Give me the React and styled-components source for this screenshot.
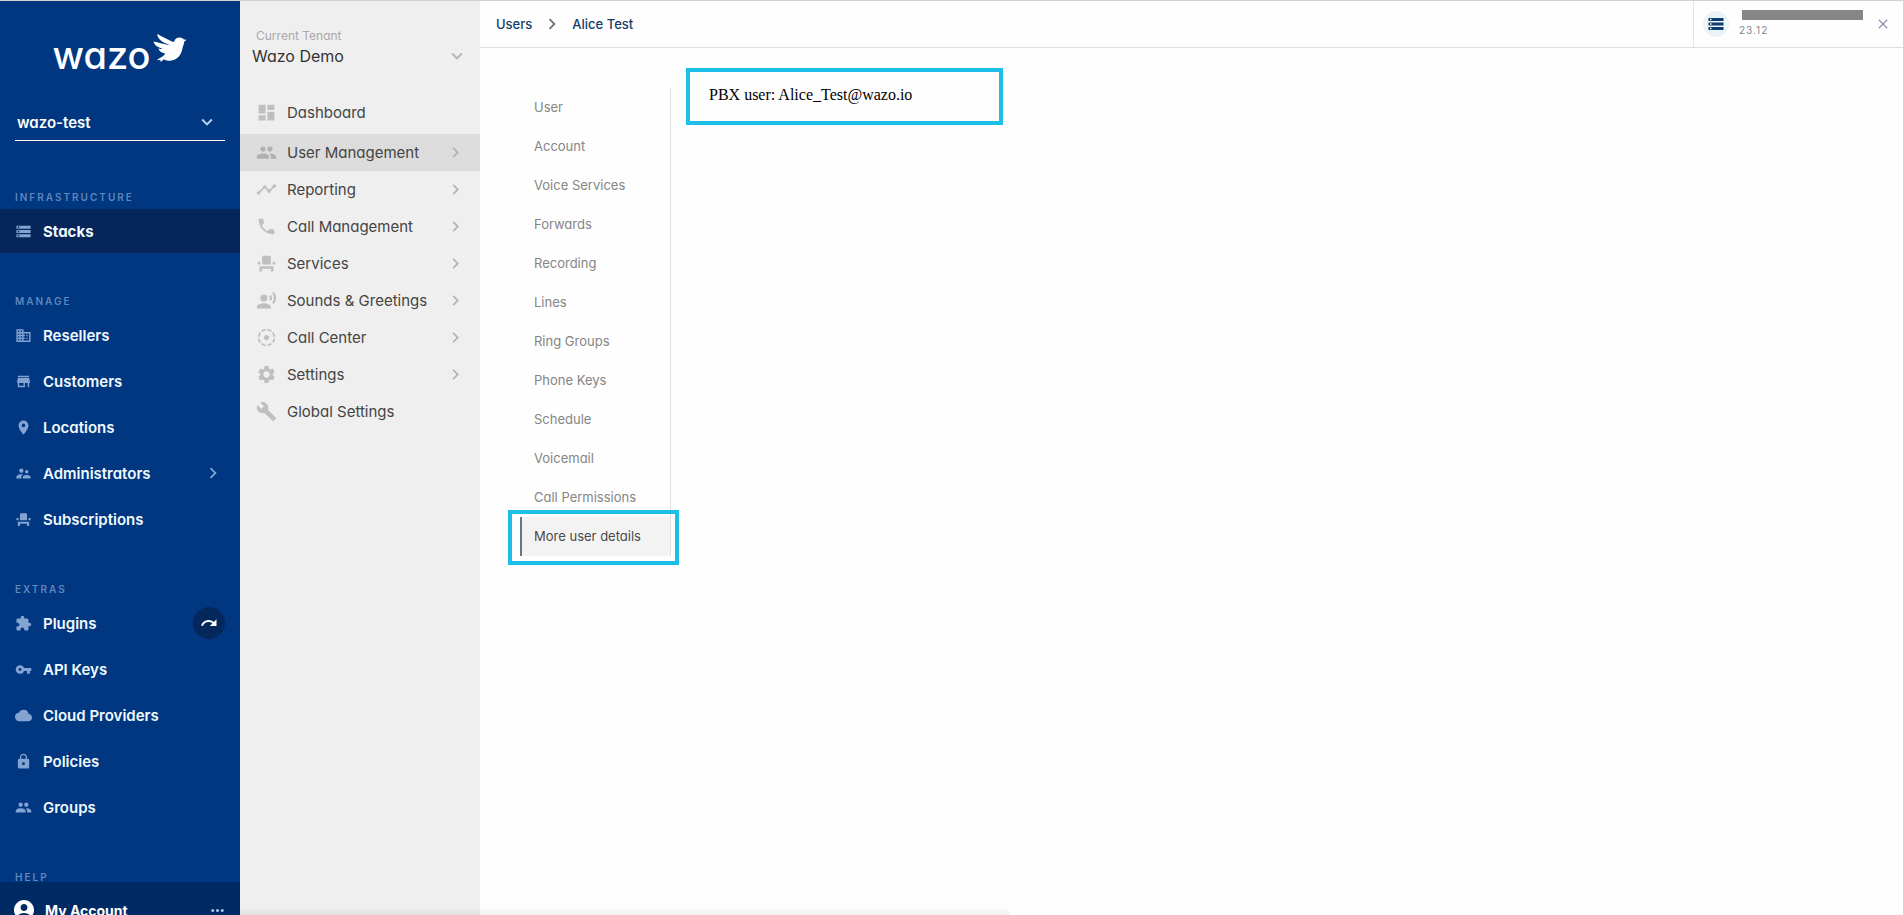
import React from "react";
import styled, { createGlobalStyle, css } from "styled-components";
import {
  MdStorage, MdDomain, MdStore, MdPlace, MdSupervisorAccount, MdEventSeat,
  MdExtension, MdVpnKey, MdCloud, MdLock, MdGroup, MdRedo, MdAccountCircle,
  MdMoreHoriz, MdDashboard, MdTimeline, MdPhone, MdRecordVoiceOver,
  MdFilterTiltShift, MdSettings, MdBuild, MdClose,
  MdKeyboardArrowDown, MdKeyboardArrowRight,
} from "react-icons/md";

const GlobalStyle = createGlobalStyle`
  *, *::before, *::after { box-sizing: border-box; }
  body {
    margin: 0;
    background: #fefefe;
    color: #444;
    font-family: Inter, "Open Sans", sans-serif;
    font-feature-settings: "cv11";
    font-size: 15px;
  }
  a { color: inherit; text-decoration: none; }
  button, select {
    font: inherit;
    font-feature-settings: inherit;
    color: inherit;
    background: none;
    border: 0;
    padding: 0;
    margin: 0;
    cursor: pointer;
  }
  select { appearance: none; }
  svg { display: block; flex: none; }
`;

const Page = styled.div`
  display: grid;
  grid-template-columns: 240px 240px minmax(0, 1fr);
  height: 100vh;
  overflow: hidden;
  border-top: 1px solid #d2d2d2;
`;

/* Main sidebar */
const Sidebar = styled.aside`
  display: flex;
  flex-direction: column;
  min-height: 0;
  background: #003780;
  color: #fff;
`;

const Logo = styled.a`
  display: flex;
  align-items: flex-start;
  justify-content: center;
  height: 84px;
  padding-top: 32px;
  gap: 3px;
`;

const LogoWord = styled.span`
  margin-top: 3px;
  font-size: 38px;
  font-weight: 500;
  line-height: 38px;
`;

const Picker = styled.div`
  display: grid;
  align-items: center;
  & > * { grid-area: 1 / 1; }
  & > svg { justify-self: end; pointer-events: none; }
`;

const StackPicker = styled(Picker)`
  margin: 17px 15px 0;
  height: 39px;
  padding-top: 2px;
  border-bottom: 1px solid #fff;
  & > svg { margin-right: 7px; color: #b9d4f5; }
`;

const StackSelect = styled.select`
  height: 36px;
  padding-left: 2px;
  font-weight: 600;
  color: #fff;
`;

const SideNav = styled.nav`
  flex: 1;
  min-height: 0;
  overflow: hidden;
  padding-top: 49px;
`;

const SideGroup = styled.section`
  margin-bottom: 41px;
`;

const SideHeading = styled.h2`
  margin: 0 0 5px;
  padding-left: 15px;
  color: #5f86bd;
  font-size: 10px;
  font-weight: 600;
  line-height: 14px;
  letter-spacing: 2px;
`;

const SideList = styled.ul`
  display: grid;
  gap: 2px;
  margin: 0;
  padding: 0;
  list-style: none;
`;

const SideItem = styled.li`
  display: flex;
  align-items: center;
  height: 44px;
  padding: 0 15px;
  background: ${(p) => (p.$active ? "#06265a" : "transparent")};
`;

const SideLink = styled.a`
  flex: 1;
  display: flex;
  align-items: center;
  gap: 11px;
  font-weight: ${(p) => (p.$active ? 700 : 600)};
  color: #f0faff;
  & > svg { color: #83a3d3; }
  & > svg:last-child { margin: 0 1px 0 auto; }
`;

const RoundButton = styled.button`
  display: grid;
  place-items: center;
  width: 32px;
  height: 32px;
  border-radius: 50%;
  background: #05285c;
  color: #fff;
`;

const AccountBar = styled.div`
  flex: 0 0 33px;
  overflow: hidden;
  background: #002a64;
`;

const AccountRow = styled.div`
  display: flex;
  align-items: center;
  justify-content: space-between;
  height: 56px;
  padding: 0 13px 0 12px;
`;

const AccountLink = styled.a`
  display: flex;
  align-items: center;
  gap: 9px;
  font-size: 14px;
  font-weight: 700;
`;

const MoreButton = styled.button`
  color: #a9c3e6;
`;

/* Tenant panel */
const TenantPanel = styled.aside`
  background: #efefef;
`;

const TenantField = styled.div`
  padding: 26px 12px 0;
  height: 93px;
`;

const TenantLabel = styled.label`
  display: block;
  padding-left: 4px;
  color: #a9a9a9;
  font-size: 12px;
  line-height: 18px;
`;

const TenantPicker = styled(Picker)`
  & > svg { color: #b5b5b5; }
`;

const TenantSelect = styled.select`
  height: 22px;
  font-size: 16px;
  color: #333;
`;

const TenantMenu = styled.ul`
  margin: 0;
  padding: 0;
  list-style: none;
`;

const TenantLink = styled.a`
  display: flex;
  align-items: center;
  gap: 10px;
  height: 37px;
  padding: 0 14px 0 16px;
  background: ${(p) => (p.$active ? "#dcdcdc" : "transparent")};
  margin-bottom: ${(p) => (p.$lead ? "3px" : "0")};
  & > svg:first-child { color: ${(p) => (p.$active ? "#b0b0b0" : "#bfbfbf")}; }
  & > svg:last-child { margin-left: auto; color: #b3b3b3; }
`;

/* Content */
const Main = styled.main`
  display: flex;
  flex-direction: column;
  min-width: 0;
`;

const Header = styled.header`
  display: flex;
  justify-content: space-between;
  height: 47px;
  border-bottom: 1px solid #dedede;
`;

const Breadcrumb = styled.nav`
  display: flex;
  align-items: center;
  gap: 9px;
  padding-left: 16px;
  color: #143c66;
  font-size: 13px;
  font-weight: 500;
  & > svg { color: #707070; }
`;

const StackInfo = styled.div`
  display: flex;
  align-items: center;
  width: 210px;
  padding: 0 12px 0 9px;
  border-left: 1px solid #e4e4e4;
`;

const StackBadge = styled.span`
  display: grid;
  place-items: center;
  width: 26px;
  height: 26px;
  margin-right: 10px;
  border-radius: 50%;
  background: #edf3fa;
  color: #0d3c72;
`;

const StackText = styled.div`
  flex: 1;
  display: grid;
  gap: 3px;
  padding-bottom: 2px;
`;

const Redacted = styled.span`
  width: 121px;
  height: 10px;
  margin-left: 3px;
  background: #868686;
`;

const Version = styled.span`
  color: #7d8794;
  font-size: 10px;
  line-height: 14px;
  letter-spacing: 1px;
`;

const CloseButton = styled.button`
  color: #8f98ac;
`;

const Body = styled.div`
  display: flex;
  align-items: flex-start;
  gap: 15px;
  padding: 20px 40px 0;
`;

const highlight = css`
  border: 4px solid #1cbfe8;
`;

const Tabs = styled.nav`
  width: 151px;
  margin-top: 20px;
  border-right: 1px solid #dfdfdf;
`;

const TabLink = styled.a`
  display: flex;
  align-items: center;
  position: relative;
  height: 39px;
  padding: 0 0 2px 12px;
  border-left: 2px solid transparent;
  color: #858585;
  font-size: 13px;
  ${(p) => p.$active && css`
    border-left-color: #66758c;
    background: #f3f3f3;
    color: #4a4a4a;
    &::after {
      content: "";
      position: absolute;
      inset: -7px -9px -9px -14px;
      ${highlight}
    }
  `}
`;

const Details = styled.section`
  ${highlight}
  flex: 0 1 317px;
  padding: 13px 19px 17px;
  color: #000;
  font-family: "Liberation Serif", serif;
  font-size: 16px;
  line-height: 19px;
`;

const BottomShade = styled.div`
  position: fixed;
  left: 240px;
  right: 47%;
  bottom: 0;
  height: 8px;
  background: linear-gradient(rgba(0, 0, 0, 0), rgba(0, 0, 0, 0.06));
  pointer-events: none;
`;

const groups = [
  { title: "INFRASTRUCTURE", items: [{ label: "Stacks", icon: MdStorage, active: true }] },
  {
    title: "MANAGE",
    items: [
      { label: "Resellers", icon: MdDomain },
      { label: "Customers", icon: MdStore },
      { label: "Locations", icon: MdPlace },
      { label: "Administrators", icon: MdSupervisorAccount, more: true },
      { label: "Subscriptions", icon: MdEventSeat },
    ],
  },
  {
    title: "EXTRAS",
    items: [
      { label: "Plugins", icon: MdExtension, action: true },
      { label: "API Keys", icon: MdVpnKey },
      { label: "Cloud Providers", icon: MdCloud },
      { label: "Policies", icon: MdLock },
      { label: "Groups", icon: MdGroup },
    ],
  },
  { title: "HELP", items: [] },
];

const tenantItems = [
  { label: "Dashboard", icon: MdDashboard, lead: true },
  { label: "User Management", icon: MdGroup, more: true, active: true },
  { label: "Reporting", icon: MdTimeline, more: true },
  { label: "Call Management", icon: MdPhone, more: true },
  { label: "Services", icon: MdEventSeat, more: true },
  { label: "Sounds & Greetings", icon: MdRecordVoiceOver, more: true },
  { label: "Call Center", icon: MdFilterTiltShift, more: true },
  { label: "Settings", icon: MdSettings, more: true },
  { label: "Global Settings", icon: MdBuild },
];

const tabs = [
  "User", "Account", "Voice Services", "Forwards", "Recording", "Lines",
  "Ring Groups", "Phone Keys", "Schedule", "Voicemail", "Call Permissions",
  "More user details",
];

function Bird() {
  return (
    <svg width="34" height="30" viewBox="0 0 34 30" fill="#fff" aria-hidden="true">
      <path d="M4.200 1.200C5.200 1 6 1.700 7 2.400L18.500 8.200C20 8.900 21.200 8.900 21.300 8.200C21.800 5.800 24 4.400 26.400 4.400C28.500 4.400 30 5.300 30.900 6.600L33.600 6.700L31.200 8.700C31.200 11 30.200 12.500 29.700 14.500C28.500 21.500 24.500 27.500 17 27.700C14.500 27.800 12.500 27.200 10.800 26.200L8.700 28.200C8.400 28.600 7.400 28.700 7.300 28L7.500 26.800L5 27.200C4.200 27 4.500 26.200 5.200 25.900L9.500 23.600C11 22.700 11.800 21.700 12.100 20.600C8.500 19.800 6 18 5.400 15.500C7 16 8.500 16 9.500 15.600C4.500 14.600 1.400 12 .5 8.600C2 8.500 14 12.300 18.700 12.500C13 11.200 4.700 7.300 4.200 1.200Z" />
    </svg>
  );
}

export default function App() {
  return (
    <>
      <GlobalStyle />
      <Page>
        <Sidebar>
          <Logo href="#home">
            <LogoWord>wazo</LogoWord>
            <Bird />
          </Logo>
          <StackPicker>
            <StackSelect aria-label="Organisation" defaultValue="wazo-test">
              <option>wazo-test</option>
            </StackSelect>
            <MdKeyboardArrowDown size={22} />
          </StackPicker>
          <SideNav aria-label="Main">
            {groups.map((group) => (
              <SideGroup key={group.title}>
                <SideHeading>{group.title}</SideHeading>
                <SideList>
                  {group.items.map(({ label, icon: Icon, active, more, action }) => (
                    <SideItem key={label} $active={active}>
                      <SideLink href="#nav" $active={active}>
                        <Icon size={17} />
                        <span>{label}</span>
                        {more && <MdKeyboardArrowRight size={22} />}
                      </SideLink>
                      {action && (
                        <RoundButton type="button" aria-label="Reload plugins">
                          <MdRedo size={18} />
                        </RoundButton>
                      )}
                    </SideItem>
                  ))}
                </SideList>
              </SideGroup>
            ))}
          </SideNav>
          <AccountBar>
            <AccountRow>
              <AccountLink href="#account">
                <MdAccountCircle size={24} />
                <span>My Account</span>
              </AccountLink>
              <MoreButton type="button" aria-label="Account options">
                <MdMoreHoriz size={19} />
              </MoreButton>
            </AccountRow>
          </AccountBar>
        </Sidebar>

        <TenantPanel>
          <TenantField>
            <TenantLabel htmlFor="tenant">Current Tenant</TenantLabel>
            <TenantPicker>
              <TenantSelect id="tenant" defaultValue="Wazo Demo">
                <option>Wazo Demo</option>
              </TenantSelect>
              <MdKeyboardArrowDown size={22} />
            </TenantPicker>
          </TenantField>
          <TenantMenu>
            {tenantItems.map(({ label, icon: Icon, active, more, lead }) => (
              <li key={label}>
                <TenantLink href="#section" $active={active} $lead={lead}>
                  <Icon size={21} />
                  <span>{label}</span>
                  {more && <MdKeyboardArrowRight size={21} />}
                </TenantLink>
              </li>
            ))}
          </TenantMenu>
        </TenantPanel>

        <Main>
          <Header>
            <Breadcrumb aria-label="Breadcrumb">
              <a href="#users">Users</a>
              <MdKeyboardArrowRight size={22} />
              <a href="#alice">Alice Test</a>
            </Breadcrumb>
            <StackInfo>
              <StackBadge><MdStorage size={18} /></StackBadge>
              <StackText>
                <Redacted />
                <Version>23.12</Version>
              </StackText>
              <CloseButton type="button" aria-label="Close">
                <MdClose size={16} />
              </CloseButton>
            </StackInfo>
          </Header>
          <Body>
            <Tabs aria-label="User sections">
              {tabs.map((tab) => (
                <TabLink key={tab} href="#tab" $active={tab === "More user details"}>
                  {tab}
                </TabLink>
              ))}
            </Tabs>
            <Details>PBX user: Alice_Test@wazo.io</Details>
          </Body>
        </Main>
      </Page>
      <BottomShade />
    </>
  );
}
